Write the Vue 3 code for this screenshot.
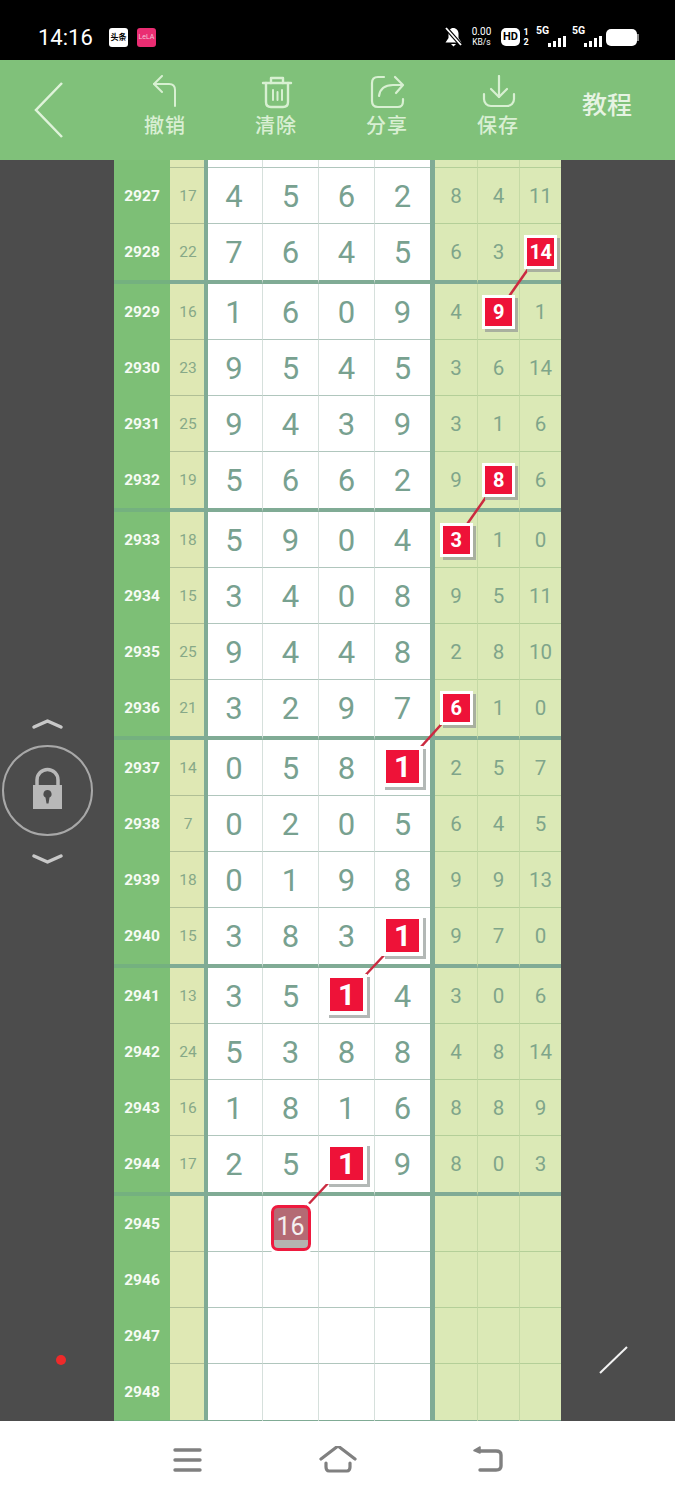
<template>
  <div class="screen">
    <!-- status bar -->
    <div class="status">
      <span class="time">14:16</span>
      <span class="app-icon toutiao">头条</span>
      <span class="app-icon lela">LeLA</span>
      <span class="status-spacer"></span>
      <svg class="bell" width="19" height="20" viewBox="0 0 19 20">
        <path d="M9 1c3.400 0 5.500 2.600 5.500 5.500v4.500l3 4.500h-16l3-4.500v-4.500c0-2.900 2-5.500 4.500-5.500z" fill="#fff" />
        <path d="M7 17h5l-2.500 2.500z" fill="#fff" />
        <path d="M2 1l15 17" stroke="#000" stroke-width="4" />
        <path d="M2 1l15 17" stroke="#fff" stroke-width="1.800" />
      </svg>
      <div class="speed"><span>0.00</span><span class="unit">KB/s</span></div>
      <span class="hd">HD</span>
      <div class="sim"><span>1</span><span>2</span></div>
      <div v-for="n in 2" :key="n" class="net">
        <span class="net-label">5G</span>
        <span class="bars"><i v-for="b in barHeights" :key="b" :style="{ height: b + 'px' }"></i></span>
      </div>
      <span class="battery"></span>
    </div>

    <!-- toolbar -->
    <div class="toolbar">
      <div class="back">
        <svg width="32" height="58" viewBox="0 0 32 58" fill="none">
          <path d="M29 2L3 29l26 27" stroke="#dff3da" stroke-width="2.500" />
        </svg>
      </div>
      <div class="action">
        <svg width="36" height="34" viewBox="0 0 36 34" fill="none" stroke="#d8f0d2" stroke-width="2" stroke-linecap="round" stroke-linejoin="round">
          <path d="M14 1L6 9l8 8" />
          <path d="M6 9h15c4 0 6 2 6 6v16" />
        </svg>
        <span>撤销</span>
      </div>
      <div class="action">
        <svg width="36" height="34" viewBox="0 0 36 34" fill="none" stroke="#d8f0d2" stroke-width="2.400" stroke-linecap="round" stroke-linejoin="round">
          <path d="M4 8h28" />
          <path d="M12 8V3h12v5" />
          <path d="M7 8v19c0 3 2 5 5 5h12c3 0 5-2 5-5V8" />
          <path d="M14 15v10M18.500 17v8M23 15v10" stroke-width="2" />
        </svg>
        <span>清除</span>
      </div>
      <div class="action">
        <svg width="36" height="34" viewBox="0 0 36 34" fill="none" stroke="#d8f0d2" stroke-width="2.200" stroke-linecap="round" stroke-linejoin="round">
          <path d="M14 2H8C4 2 2 4 2 8v18c0 4 2 6 6 6h20c4 0 5-2 5-6v-2" />
          <path d="M9 21c1-7 6-11 14-11h9" />
          <path d="M25 2l8 8-7 8" />
        </svg>
        <span>分享</span>
      </div>
      <div class="action">
        <svg width="36" height="34" viewBox="0 0 36 34" fill="none" stroke="#d8f0d2" stroke-width="2.200" stroke-linecap="round" stroke-linejoin="round">
          <path d="M18 1v21" />
          <path d="M10 14l8 8 8-8" />
          <path d="M3 19v5c0 4 3 7 7 7h16c4 0 7-3 7-7v-5" />
        </svg>
        <span>保存</span>
      </div>
      <div class="tutorial">教程</div>
    </div>

    <!-- chart area -->
    <div class="main">
      <aside class="side-left">
        <svg width="95" height="150" viewBox="0 0 95 150" fill="none">
          <path d="M34 12L47.500 6 61 12" stroke="#c8c8c8" stroke-width="3.500" stroke-linecap="round" stroke-linejoin="round" />
          <circle cx="47.500" cy="75.500" r="44.500" stroke="#a8a8a8" stroke-width="2" />
          <path d="M37 70v-5a10.500 10.500 0 0 1 21 0v5" stroke="#b8b8b8" stroke-width="3.500" />
          <path fill-rule="evenodd" d="M33 70h29v24H33zM47.500 75a4 4 0 0 0-2 7.500l1 6h2l1-6A4 4 0 0 0 47.500 75z" fill="#b8b8b8" />
          <path d="M34 141L47.500 147 61 141" stroke="#c8c8c8" stroke-width="3.500" stroke-linecap="round" stroke-linejoin="round" />
        </svg>
        <span class="red-dot"></span>
      </aside>

      <div class="chart">
        <div
          v-for="(row, r) in rows"
          :key="r"
          class="row"
          :class="{ stub: row.stub, 'group-end': row.groupEnd }"
        >
          <div class="cell id">{{ row.id }}</div>
          <div class="cell sum">{{ row.sum }}</div>
          <div
            v-for="(d, c) in row.digits"
            :key="c"
            class="cell digit"
          >
            <span v-if="row.mark === c" class="tile big">{{ d }}</span>
            <template v-else>{{ d }}</template>
            <span v-if="row.pending === c" class="pending">16</span>
          </div>
          <div class="cell gap"></div>
          <div
            v-for="(v, c) in row.rights"
            :key="'r' + c"
            class="cell right"
          >
            <span v-if="row.mark === c + 4" class="tile small">{{ v }}</span>
            <template v-else>{{ v }}</template>
          </div>
        </div>

        <div class="vline first"></div>
        <div class="vline second"></div>

        <svg class="links" width="447" height="1261">
          <line
            v-for="(l, i) in links"
            :key="i"
            :x1="l.x1"
            :y1="l.y1"
            :x2="l.x2"
            :y2="l.y2"
            stroke="#cb2a40"
            stroke-width="2.500"
          />
        </svg>
      </div>

      <aside class="side-right">
        <svg width="30" height="30" viewBox="0 0 30 30">
          <path d="M1 28L28 2" stroke="#f2f2f2" stroke-width="2" />
        </svg>
      </aside>
    </div>

    <!-- navigation bar -->
    <div class="nav">
      <svg width="32" height="28" viewBox="0 0 32 28" fill="none" stroke="#808080" stroke-width="3.400" stroke-linecap="round">
        <path d="M3 4h25M3 14h25M3 24h25" />
      </svg>
      <svg width="38" height="30" viewBox="0 3 38 30" fill="none" stroke="#808080" stroke-width="3.200" stroke-linecap="round" stroke-linejoin="round">
        <path d="M2 16L19 3l17 13" />
        <path d="M7 20v4c0 2 1 4 3 4h18c2 0 3-2 3-4v-4" />
      </svg>
      <svg width="32" height="28" viewBox="0 0 32 28" fill="none" stroke="#808080" stroke-width="3.400" stroke-linecap="round" stroke-linejoin="round">
        <path d="M8 5h16c3 0 5 1 5 4v11c0 3-2 4-5 4H8" />
        <path d="M8 1L2 4.500 8 7z" fill="#808080" stroke-width="1.500" />
      </svg>
    </div>
  </div>
</template>

<script setup>
const barHeights = [4, 6, 9, 11]

// id, sum, four digits, three right values, marked column (0-3 digits, 4-6 right)
const raw = [
  [2927, 17, [4, 5, 6, 2], [8, 4, 11]],
  [2928, 22, [7, 6, 4, 5], [6, 3, 14], 6],
  [2929, 16, [1, 6, 0, 9], [4, 9, 1], 5],
  [2930, 23, [9, 5, 4, 5], [3, 6, 14]],
  [2931, 25, [9, 4, 3, 9], [3, 1, 6]],
  [2932, 19, [5, 6, 6, 2], [9, 8, 6], 5],
  [2933, 18, [5, 9, 0, 4], [3, 1, 0], 4],
  [2934, 15, [3, 4, 0, 8], [9, 5, 11]],
  [2935, 25, [9, 4, 4, 8], [2, 8, 10]],
  [2936, 21, [3, 2, 9, 7], [6, 1, 0], 4],
  [2937, 14, [0, 5, 8, 1], [2, 5, 7], 3],
  [2938, 7, [0, 2, 0, 5], [6, 4, 5]],
  [2939, 18, [0, 1, 9, 8], [9, 9, 13]],
  [2940, 15, [3, 8, 3, 1], [9, 7, 0], 3],
  [2941, 13, [3, 5, 1, 4], [3, 0, 6], 2],
  [2942, 24, [5, 3, 8, 8], [4, 8, 14]],
  [2943, 16, [1, 8, 1, 6], [8, 8, 9]],
  [2944, 17, [2, 5, 1, 9], [8, 0, 3], 2],
  [2945, '', ['', '', '', ''], ['', '', ''], undefined, 1],
  [2946, '', ['', '', '', ''], ['', '', '']],
  [2947, '', ['', '', '', ''], ['', '', '']],
  [2948, '', ['', '', '', ''], ['', '', '']],
]

const rows = [
  { stub: true, id: '', sum: '', digits: ['', '', '', ''], rights: ['', '', ''] },
  ...raw.map(([id, sum, digits, rights, mark, pending]) => ({
    id,
    sum,
    digits,
    rights,
    mark,
    pending,
    groupEnd: (id - 2924) % 4 === 0,
  })),
]

// centre of each selectable column, relative to the chart
const colX = [120, 176, 232, 288, 342, 384, 426]

function rowY(index) {
  // first data row starts 8px down, 56px rows, every 4th has 4px extra
  // index 0 = 2927, and 2928 is the first one closing a group
  const groupsBefore = Math.floor((index + 2) / 4)
  return 8 + index * 56 + groupsBefore * 4 + 28
}

const pairs = [
  [1, 6, 2, 5],
  [5, 5, 6, 4],
  [9, 4, 10, 3],
  [13, 3, 14, 2],
  [17, 2, 18, 1],
]

const links = pairs.map(([r1, c1, r2, c2]) => ({
  x1: colX[c1],
  y1: rowY(r1),
  x2: colX[c2],
  y2: rowY(r2),
}))
</script>

<style scoped>
.screen {
  width: 675px;
  height: 1500px;
  display: flex;
  flex-direction: column;
  overflow: hidden;
  font-family: "Roboto", "Noto Sans CJK SC", sans-serif;
}

.status {
  height: 60px;
  flex: none;
  background: #000;
  color: #fff;
  display: flex;
  align-items: center;
  padding: 14px 38px 0 38px;
  box-sizing: border-box;
}

.time {
  font-size: 22px;
  width: 71px;
}

.app-icon {
  width: 19px;
  height: 19px;
  margin-right: 9px;
  font-size: 8px;
  line-height: 19px;
  text-align: center;
  overflow: hidden;
  white-space: nowrap;
  border-radius: 3px;
}

.toutiao {
  background: #fff;
  color: #000;
  font-weight: 700;
}

.lela {
  background: #ea2d72;
  color: #f5c4d8;
  font-size: 7px;
}

.status-spacer {
  flex: 1;
}

.bell {
  margin-right: 6px;
}

.speed {
  display: flex;
  flex-direction: column;
  align-items: center;
  width: 25px;
  margin-right: 7px;
  font-size: 10px;
  line-height: 10.500px;
}

.speed .unit {
  font-size: 8.500px;
}

.hd {
  width: 19px;
  height: 18px;
  background: #fff;
  color: #000;
  border-radius: 5px;
  font-size: 11px;
  font-weight: 700;
  line-height: 18px;
  text-align: center;
}

.sim {
  display: flex;
  flex-direction: column;
  width: 8px;
  margin: 0 5px 0 2px;
  font-size: 9px;
  font-weight: 700;
  line-height: 10px;
  text-align: center;
}

.net {
  width: 31px;
  margin-right: 5px;
  height: 20px;
  position: relative;
  display: flex;
  justify-content: flex-end;
  align-items: flex-end;
}

.net-label {
  position: absolute;
  left: 1px;
  top: -3px;
  font-size: 10.500px;
  font-weight: 700;
  line-height: 14px;
}

.bars {
  display: flex;
  align-items: flex-end;
  gap: 2px;
}

.bars i {
  display: block;
  width: 3px;
  background: #fff;
}

.battery {
  width: 31px;
  height: 17px;
  background: #fff;
  border-radius: 5px;
  margin-left: -1px;
  box-shadow: 7px 0 0 -5px #888;
}

.toolbar {
  height: 100px;
  flex: none;
  background: #80c17a;
  display: flex;
  align-items: flex-start;
}

.back {
  width: 110px;
  flex: none;
  padding: 21px 0 0 33px;
  box-sizing: border-box;
}

.action {
  width: 111px;
  flex: none;
  display: flex;
  flex-direction: column;
  align-items: center;
  padding-top: 15px;
  color: #d9efd3;
  font-size: 20px;
  font-weight: 500;
  line-height: 28px;
}

.action span {
  letter-spacing: 1px;
  margin: 3px 1px 0 0;
}

.tutorial {
  flex: 1;
  text-align: center;
  color: #e6f3e2;
  font-size: 25px;
  font-weight: 500;
  line-height: 92px;
  padding-right: 15px;
}

.main {
  height: 1261px;
  flex: none;
  background: #4c4c4c;
  display: flex;
  overflow: hidden;
}

.side-left {
  width: 114px;
  flex: none;
  padding-top: 555px;
  box-sizing: border-box;
}

.side-left svg {
  display: block;
}

.red-dot {
  display: block;
  width: 10px;
  height: 10px;
  border-radius: 50%;
  background: #ee2a2a;
  margin: 490px 0 0 56px;
}

.side-right {
  width: 114px;
  flex: none;
  padding: 1185px 0 0 38px;
  box-sizing: border-box;
}

.chart {
  width: 447px;
  flex: none;
  position: relative;
  overflow: hidden;
}

.row {
  display: grid;
  grid-template-columns: 56px 36px repeat(4, 56px) 5px repeat(3, 42px);
  height: 56px;
}

.row.stub {
  height: 8px;
}

.row.group-end {
  height: 60px;
}

.cell {
  display: flex;
  align-items: center;
  justify-content: center;
  box-sizing: border-box;
  border-bottom: 1px solid;
}

.group-end .cell {
  border-bottom-width: 4px;
}

.id {
  background: #7dbf76;
  border-bottom-color: #7dbf76;
  color: #f6fbf4;
  font-size: 15.500px;
  font-weight: 700;
}

.group-end .id {
  border-bottom-color: #74b17f;
}

.sum {
  background: #dfe8b4;
  border-bottom-color: #b0bf95;
  color: #87a888;
  font-size: 15.500px;
}

.digit {
  background: #fff;
  border-bottom-color: #b0c6bd;
  color: #78a190;
  font-size: 31px;
  position: relative;
  padding-top: 1px;
}

.digit + .digit {
  border-left: 1px solid #d6e0dc;
}

.gap {
  background: #80ab95;
  border-bottom-color: #80ab95;
}

.right {
  background: #dbe9b6;
  border-bottom-color: #b4cf98;
  color: #7fa58a;
  font-size: 20.500px;
}

.right + .right {
  border-left: 1px solid #c5daa5;
}

.group-end .sum,
.group-end .digit,
.group-end .right {
  border-bottom-color: #80ab95;
}

.vline {
  position: absolute;
  top: 0;
  bottom: 0;
  width: 4px;
  background: #80ab95;
}

.vline.first {
  left: 90px;
}

.vline.second {
  left: 317px;
}

.links {
  position: absolute;
  left: 0;
  top: 0;
  pointer-events: none;
  z-index: 1;
}

.tile {
  position: relative;
  z-index: 2;
  display: flex;
  align-items: center;
  justify-content: center;
  box-sizing: content-box;
  background: #ee1238;
  color: #fff;
  font-weight: 700;
  background-clip: padding-box;
}

.tile.big {
  width: 33px;
  height: 33px;
  border: 4px solid #fff;
  margin-top: -3px;
  box-shadow: 3px 3px 0 #b3b8b6;
  font-size: 30px;
}

.tile.small {
  width: 27px;
  height: 28px;
  border: 3px solid #fff;
  box-shadow: 3px 3px 0 #a9b09f;
  font-size: 20px;
  letter-spacing: -0.5px;
}

.pending {
  position: relative;
  z-index: 2;
  width: 40px;
  height: 46px;
  box-sizing: border-box;
  border: 3px solid #ee1a3e;
  border-radius: 7px;
  margin-top: 7px;
  background: linear-gradient(#b46a74 0 32px, #b4b4b0 32px 40px, #fff 40px);
  color: #f4f0f0;
  font-size: 25px;
  font-weight: 400;
  line-height: 38px;
  text-align: center;
  box-shadow: 0 0 0 3px #fff;
}

.nav {
  flex: 1;
  background: #fff;
  display: flex;
  align-items: flex-start;
  justify-content: center;
  gap: 115px;
  padding-top: 25px;
}
</style>

<style>
html,
body {
  margin: 0;
  background: #000;
}
</style>
